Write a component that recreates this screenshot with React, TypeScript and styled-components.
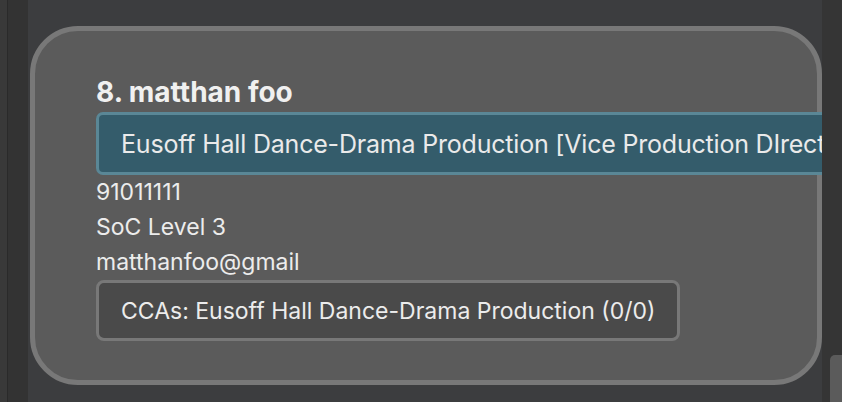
import React from "react";
import styled, { createGlobalStyle } from "styled-components";

const GlobalStyle = createGlobalStyle`
  html, body {
    margin: 0;
    padding: 0;
    width: 842px;
    height: 402px;
    overflow: hidden;
    background: #3c3d3f;
  }
  #root {
    height: 402px;
  }
`;

const Shell = styled.div`
  display: flex;
  height: 402px;
  width: 842px;
  font-family: Inter, "Noto Sans", sans-serif;
`;

const Rail = styled.div`
  width: 7px;
  background: #393939;
  border-right: 1px solid #2a2a2a;
`;

const SidePanel = styled.div`
  width: 20px;
  background: #333333;
`;

const Main = styled.div`
  flex: 1;
  min-width: 0;
  overflow: hidden;
  background: #3c3d3f;
  padding: 26px 0 0 2px;
`;

const Card = styled.div`
  box-sizing: border-box;
  width: 792px;
  height: 359px;
  border: 5px solid #787878;
  border-radius: 48px;
  background: #5b5b5b;
  padding: 64px 0 0 61px;
  display: flex;
  flex-direction: column;
  align-items: flex-start;
`;

const Name = styled.div`
  font-size: 28px;
  font-weight: 700;
  line-height: 30px;
  color: #f0f0f0;
  margin-top: -18px;
`;

const RoleTag = styled.div`
  box-sizing: border-box;
  margin-top: 5px;
  height: 63px;
  display: flex;
  align-items: center;
  padding: 0 0 0 22px;
  background: #345c6b;
  border: 3px solid #5a8796;
  border-radius: 7px;
  white-space: nowrap;
  font-size: 25px;
  color: #eaeaea;
  letter-spacing: -0.2px;
  width: 800px;
`;

const InfoLine = styled.div`
  font-size: 23px;
  line-height: 35px;
  color: #ececec;
`;

const Info = styled.div`
  display: flex;
  flex-direction: column;
  margin-top: 0;
`;

const CcaBox = styled.div`
  box-sizing: border-box;
  margin-top: 0;
  height: 61px;
  width: 584px;
  display: flex;
  align-items: center;
  padding-left: 22px;
  background: #4a4a4a;
  border: 3px solid #787878;
  border-radius: 8px;
  font-size: 23px;
  color: #ececec;
  white-space: nowrap;
`;

const ScrollTrack = styled.div`
  width: 20px;
  background: #353535;
  display: flex;
  flex-direction: column;
  align-items: flex-end;
`;

const ScrollThumb = styled.div`
  margin-top: 355px;
  width: 12px;
  flex: 1;
  background: #5b5b5b;
  border-radius: 5px 0 0 0;
`;

export default function App() {
  return (
    <>
      <GlobalStyle />
      <Shell>
        <Rail />
        <SidePanel />
        <Main>
          <Card>
            <Name>8. matthan foo</Name>
            <RoleTag>Eusoff Hall Dance-Drama Production [Vice Production DIrector]</RoleTag>
            <Info>
              <InfoLine>91011111</InfoLine>
              <InfoLine>SoC Level 3</InfoLine>
              <InfoLine>matthanfoo@gmail</InfoLine>
            </Info>
            <CcaBox>CCAs: Eusoff Hall Dance-Drama Production (0/0)</CcaBox>
          </Card>
        </Main>
        <ScrollTrack>
          <ScrollThumb />
        </ScrollTrack>
      </Shell>
    </>
  );
}
